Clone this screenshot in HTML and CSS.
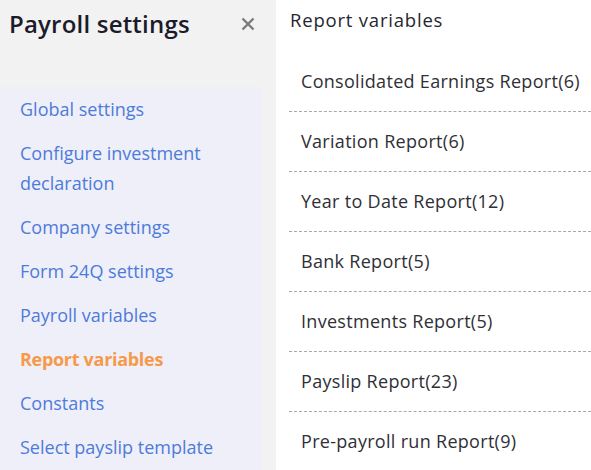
FILE: index.html
```html
<!DOCTYPE html>
<html>
<head>
<meta charset="utf-8">
<link rel="stylesheet" href="styles.css">
</head>
<body>
<div class="app">
  <aside class="sidebar">
    <div class="side-head">
      <h1 class="title">Payroll settings</h1>
      <svg class="close" width="14" height="14" viewBox="0 0 14 14"><path d="M1.5 1.5L12.5 12.5M12.5 1.5L1.5 12.5" stroke="#7a7a7a" stroke-width="2.4" stroke-linecap="butt"/></svg>
    </div>
    <nav class="nav">
      <a class="nav-item">Global settings</a>
      <a class="nav-item">Configure investment declaration</a>
      <a class="nav-item">Company settings</a>
      <a class="nav-item">Form 24Q settings</a>
      <a class="nav-item">Payroll variables</a>
      <a class="nav-item active">Report variables</a>
      <a class="nav-item">Constants</a>
      <a class="nav-item">Select payslip template</a>
    </nav>
  </aside>
  <main class="main">
    <h2 class="main-title">Report variables</h2>
    <ul class="list">
      <li class="row">Consolidated Earnings Report(6)</li>
      <li class="row">Variation Report(6)</li>
      <li class="row">Year to Date Report(12)</li>
      <li class="row">Bank Report(5)</li>
      <li class="row">Investments Report(5)</li>
      <li class="row">Payslip Report(23)</li>
      <li class="row">Pre-payroll run Report(9)</li>
    </ul>
  </main>
</div>
</body>
</html>
```
FILE: styles.css
```css
* { box-sizing: border-box; }
html, body { margin: 0; padding: 0; }
body {
  width: 591px;
  height: 470px;
  overflow: hidden;
  font-family: "Open Sans", "Noto Sans", sans-serif;
  background: #fff;
}
.app {
  display: flex;
  height: 470px;
}
.sidebar {
  width: 276px;
  flex: none;
  background: #f2f2f2;
  padding-right: 14px;
  display: flex;
  flex-direction: column;
}
.side-head {
  height: 87px;
  display: flex;
  align-items: flex-start;
  justify-content: space-between;
  padding: 9px 7px 0 9px;
}
.title {
  margin: 0;
  font-size: 24px;
  font-weight: 600;
  color: #1b1b2b;
  line-height: 30px;
  letter-spacing: 0.2px;
}
.close {
  margin-top: 8px;
}
.nav {
  flex: 1;
  background: #eeeff9;
  display: flex;
  flex-direction: column;
  gap: 14px;
  padding: 7px 20px 0 20px;
}
.nav-item {
  font-size: 18px;
  line-height: 30px;
  color: #4d7bd9;
}
.nav-item.active {
  color: #f7994a;
  font-weight: 700;
  letter-spacing: -0.3px;
}
.main {
  flex: 1;
  min-width: 0;
  padding-left: 14px;
}
.main-title {
  margin: 0;
  height: 52px;
  padding-top: 7px;
  font-size: 18.5px;
  line-height: 26px;
  font-weight: 500;
  letter-spacing: 0.8px;
  color: #26262e;
}
.list {
  list-style: none;
  margin: 0 0 0 -1px;
  padding: 0;
}
.row {
  height: 60px;
  display: flex;
  align-items: center;
  padding: 0 0 2px 12px;
  font-size: 18px;
  letter-spacing: 0.3px;
  color: #2f2f36;
  border-bottom: 1px dashed #a8a8a8;
  white-space: nowrap;
}
```
